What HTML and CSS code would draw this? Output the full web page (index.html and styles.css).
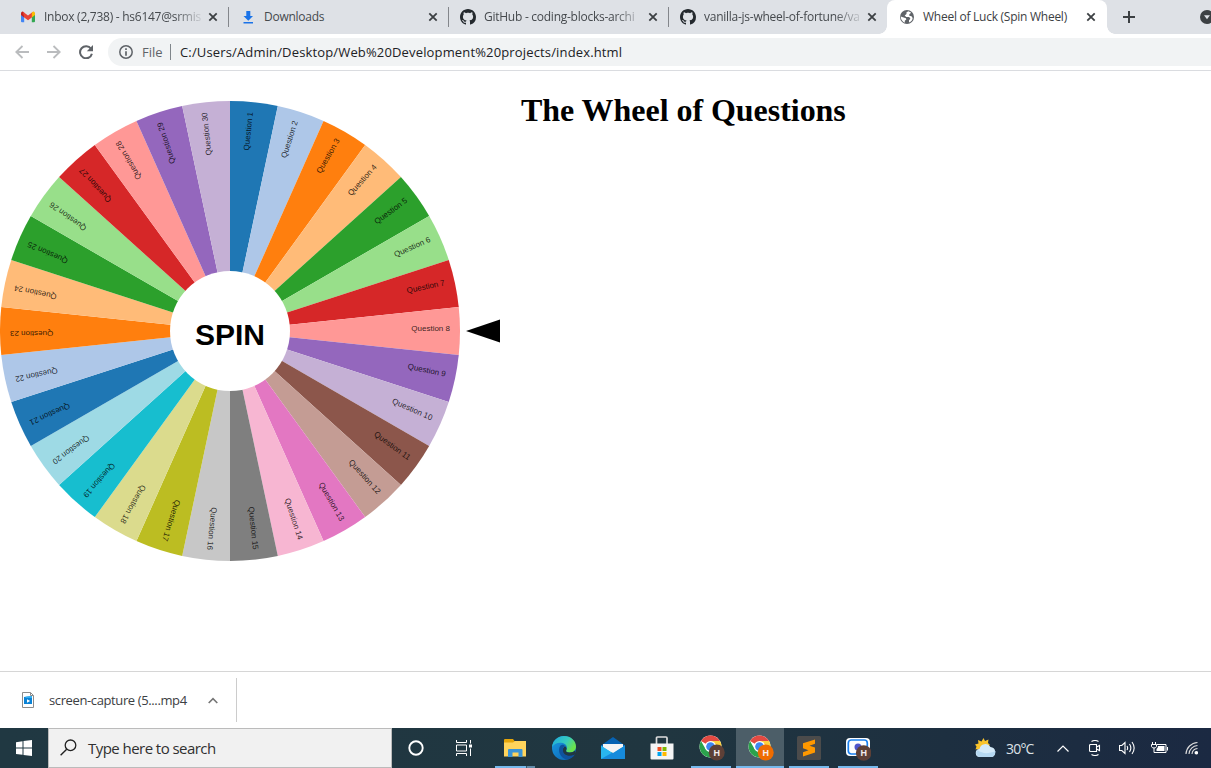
FILE: index.html
```html
<!DOCTYPE html>
<html lang="en">
<head>
<meta charset="utf-8">
<title>Wheel of Luck (Spin Wheel)</title>
<link rel="stylesheet" href="styles.css">
</head>
<body>
<svg class="defs" width="0" height="0" aria-hidden="true">
  <symbol id="close" viewBox="0 0 10 10"><path d="M1.300 1.300l7.400 7.400M8.700 1.300L1.300 8.700" stroke="#3c4043" stroke-width="1.800" fill="none"/></symbol>
  <symbol id="github" viewBox="0 0 16 16"><path fill="#24292e" d="M8 0C3.58 0 0 3.58 0 8c0 3.54 2.29 6.53 5.47 7.59.4.07.55-.17.55-.38 0-.19-.01-.82-.01-1.49-2.01.37-2.53-.49-2.69-.94-.09-.23-.48-.94-.82-1.13-.28-.15-.68-.52-.01-.53.63-.01 1.08.58 1.23.82.72 1.21 1.87.87 2.33.66.07-.52.28-.87.51-1.07-1.78-.2-3.64-.89-3.64-3.95 0-.87.31-1.59.82-2.15-.08-.2-.36-1.02.08-2.12 0 0 .67-.21 2.2.82.64-.18 1.32-.27 2-.27s1.36.09 2 .27c1.53-1.04 2.2-.82 2.2-.82.44 1.1.16 1.92.08 2.12.51.56.82 1.27.82 2.15 0 3.07-1.87 3.75-3.65 3.95.29.25.54.73.54 1.48 0 1.07-.01 1.93-.01 2.2 0 .21.15.46.55.38A8.01 8.01 0 0016 8c0-4.42-3.58-8-8-8z"/></symbol>
  <symbol id="chrome" viewBox="0 0 26 26">
    <circle cx="11.5" cy="11.5" r="11" fill="#fff"/>
    <path d="M11.500 11.500L2 6A11 11 0 0 1 21 6z" fill="#e34a42"/>
    <path d="M11.500 6H21A11 11 0 0 1 11.500 22.500L16.300 14.200z" fill="#fdd03b"/>
    <path d="M2 6A11 11 0 0 0 11.500 22.500L16.300 14.200 6.700 14.200z" fill="#2ba24c"/>
    <circle cx="11.500" cy="11.500" r="5.500" fill="#fff"/><circle cx="11.500" cy="11.500" r="4.300" fill="#3f86f0"/>
  </symbol>
</svg>

<header class="tabstrip">
  <div class="tab">
    <svg class="favicon" viewBox="0 0 16 16"><path d="M1 4v8.300q0 1 1 1h2.200V6.500z" fill="#4285f4"/><path d="M15 4v8.300q0 1-1 1h-2.200V6.500z" fill="#34a853"/><path d="M1 4.300Q1 2.500 2.700 2.500L4.200 3.500v5L1 6z" fill="#c5221f"/><path d="M2.700 2.500L8 6.400l5.300-3.900-1.500 6L8 11.200 4.200 8.400z" fill="#ea4335"/><path d="M11.800 3.600l1.500-1.100Q15 2.700 15 4.300V6l-3.200 2.500z" fill="#fbbc04"/></svg>
    <span class="title fade">Inbox (2,738) - hs6147@srmis</span><svg class="close"><use href="#close"/></svg>
  </div>
  <div class="tab">
    <svg class="favicon" viewBox="0 0 16 16"><path d="M6.300 2h4v5H13L8.300 11.700 3.500 7h2.800zM3.500 13h9.500v1.600H3.500z" fill="#1a73e8"/></svg>
    <span class="title">Downloads</span><svg class="close"><use href="#close"/></svg>
  </div>
  <div class="tab">
    <svg class="favicon"><use href="#github"/></svg>
    <span class="title fade">GitHub - coding-blocks-archi</span><svg class="close"><use href="#close"/></svg>
  </div>
  <div class="tab last">
    <svg class="favicon"><use href="#github"/></svg>
    <span class="title fade">vanilla-js-wheel-of-fortune/va</span><svg class="close"><use href="#close"/></svg>
  </div>
  <div class="tab active">
    <svg class="favicon" viewBox="0 0 16 16"><circle cx="8" cy="8" r="7" fill="#5f6368"/><path d="M9.500 2.300L7.500 3.300v1.800L5.700 6.500l1.500 1.400 3 .2 1.200 1.600-1.400 1.500v2.400Q13.400 12 13.700 9L12.500 7.300l-2.200-.5V5.300l1.900-1.500zM1.700 7.500l5.200 1.700.4 1.400-1.500 1.200v1.900Q2 12 1.700 7.500z" fill="#fff"/></svg>
    <span class="title">Wheel of Luck (Spin Wheel)</span><svg class="close"><use href="#close"/></svg>
  </div>
  <svg class="plus" viewBox="0 0 12 12"><path d="M6 0v12M0 6h12" stroke="#3c4043" stroke-width="2"/></svg>
  <svg class="tabsearch" viewBox="0 0 14 14"><circle cx="7" cy="7" r="7" fill="#3c4043"/><path d="M4 5.200h6L7 9.300z" fill="#dee1e6"/></svg>
</header>

<nav class="toolbar">
  <svg class="arrow" viewBox="0 0 14 14"><path d="M14 7H1.500M7.500 1L1.300 7l6.200 6" fill="none" stroke="#babcbe" stroke-width="1.800"/></svg>
  <svg class="arrow" viewBox="0 0 14 14"><path d="M0 7h12.500M6.500 1l6.200 6-6.200 6" fill="none" stroke="#babcbe" stroke-width="1.800"/></svg>
  <svg class="arrow" viewBox="0 0 14 14"><path d="M12 3.800A6 6 0 1 0 12.900 8.700" fill="none" stroke="#5f6368" stroke-width="2"/><path d="M14 0v6.200H7.800z" fill="#5f6368"/></svg>
  <div class="omnibox">
    <svg class="info" viewBox="0 0 14 14"><circle cx="7" cy="7" r="6.200" fill="none" stroke="#5f6368" stroke-width="1.500"/><path d="M7 3.200v1.700M7 6.200v4.600" stroke="#5f6368" stroke-width="1.700"/></svg>
    <span class="scheme">File</span><span class="url">C:/Users/Admin/Desktop/Web%20Development%20projects/index.html</span>
  </div>
</nav>

<main class="page">
  <svg class="wheel" id="wheel" viewBox="0 0 500 500"></svg>
  <h1>The Wheel of Questions</h1>
</main>

<section class="shelf">
  <div class="download">
    <svg class="file" viewBox="0 0 12 16"><path d="M.5.500h8l3 3v12H.5z" fill="#fff" stroke="#8c8c8c"/><path d="M8.500.500v3h3" fill="none" stroke="#8c8c8c"/><path d="M2 5l8-1v8H2z" fill="#0b83d6"/><path d="M3.500 4.800L10 4v2H3.500z" fill="#31aef0"/><path d="M5 7.200l3.200 1.800L5 10.800z" fill="#fff"/></svg>
    <span class="filename">screen-capture (5....mp4</span>
    <svg class="caret" viewBox="0 0 10 7"><path d="M.7 6L5 1.600 9.300 6" fill="none" stroke="#757575" stroke-width="1.600"/></svg>
  </div>
</section>

<footer class="taskbar">
  <div class="start"><svg width="16" height="16" viewBox="0 0 16 16"><path d="M0 2.200L6.500 1.300v6.200H0zM7.500 1.100L16 0v7.500H7.500zM0 8.500h6.500v6.300L0 13.900zM7.500 8.500H16V16l-8.500-1.100z" fill="#fff"/></svg></div>
  <div class="search"><svg width="17" height="17" viewBox="0 0 17 17"><circle cx="10.500" cy="6.300" r="5.300" fill="none" stroke="#222" stroke-width="1.300"/><path d="M6.700 10.200L.6 16.300" stroke="#222" stroke-width="1.400"/></svg><span>Type here to search</span></div>
  <div class="item cortana"><svg width="16" height="16" viewBox="0 0 16 16"><circle cx="8" cy="8" r="6.700" fill="none" stroke="#fff" stroke-width="1.900"/></svg></div>
  <div class="item taskview"><svg width="16" height="16" viewBox="0 0 16 16"><path d="M.5 0v2.500h10V0M.5 16v-2.500h10V16M.5 5h10v6H.5zM14.500 0v3.500M14.500 8.500V16" fill="none" stroke="#fff"/><path d="M13 4.500h3v3h-3z" fill="#fff"/></svg></div>
  <div class="item explorer"><svg width="22" height="19" viewBox="0 0 22 19"><path d="M0 1q0-1 1-1h8l1.500 2H22v5H0z" fill="#e5a50a"/><path d="M0 3.500h9L11 2h11v15.500H0z" fill="#ffd45c"/><path d="M4 18v-7q0-1 1-1h12.500q1 0 1 1v7h-4v-4.500h-6V18z" fill="#3a94d8"/></svg></div>
  <div class="item"><svg width="24" height="24" viewBox="0 0 24 24">
    <defs><linearGradient id="eg" x1="0" x2="1" y1="0" y2=".5"><stop stop-color="#1ba9df"/><stop offset=".6" stop-color="#37cbbf"/><stop offset="1" stop-color="#6be24b"/></linearGradient><linearGradient id="eb" x1="0" x2="1" y1="0" y2="1"><stop stop-color="#1a9de4"/><stop offset="1" stop-color="#0a5eae"/></linearGradient></defs>
    <circle cx="12" cy="12" r="12" fill="url(#eb)"/><path d="M0 11C1 4 6 0 12 0c7 0 12 5 12 10.500 0 4-3 6-6.500 6-3 0-4-1.300-3.200-2.500C16 11.500 14.500 7 9 6.700 4.500 6.500 1.500 8.500 0 11z" fill="url(#eg)"/><path d="M14.300 14c-.8 1.200.2 2.500 3.200 2.500 2.500 0 4.500-.7 5.500-2v4c-4 3-10 2-12-1.500-1.500-3 .5-6 2-6.700 1.500.7 2 2.500 1.300 3.700z" fill="#203742"/><path d="M8.500 9.500C5 14 8 22.500 15 23.500c3-.5 6-2 8-5-6 3-13 .5-12-5.500.3-1.500 1-2.500 2-3-1-1.300-3-1.700-4.500-.5z" fill="#0e529d"/></svg></div>
  <div class="item"><svg width="24" height="22" viewBox="0 0 24 22"><path d="M0 8.500L12 0l12 8.500V13H0z" fill="#0763b3"/><path d="M2 7h20v8H2z" fill="#f2f2f2"/><path d="M0 8.500L12 16 24 8.500V22H0z" fill="#29b6ef"/><path d="M0 22L24 8.500V22z" fill="#168bdc"/><path d="M2 7h20v2.500L12 16 2 9.500z" fill="#f5f5f5"/></svg></div>
  <div class="item"><svg width="24" height="24" viewBox="0 0 24 24"><path d="M6.500 8V2q0-1 1-1h8.500q1 0 1 1v6" fill="none" stroke="#ddd" stroke-width="1.700"/><path d="M.5 7.500h23v15q0 1-1 1h-21q-1 0-1-1z" fill="#f5f5f5"/><path d="M7.500 11h4v4h-4z" fill="#f25022"/><path d="M12.500 11h4v4h-4z" fill="#7fba00"/><path d="M7.500 16h4v4h-4z" fill="#00a4ef"/><path d="M12.500 16h4v4h-4z" fill="#ffb900"/></svg></div>
  <div class="item open"><svg class="app browser" viewBox="0 0 26 26"><use href="#chrome"/><circle cx="17.700" cy="17.500" r="8" fill="#5d4037"/><text x="17.700" y="20.800" class="badge">H</text></svg></div>
  <div class="item open current"><svg class="app browser" viewBox="0 0 26 26"><use href="#chrome"/><circle cx="17.700" cy="17.500" r="8" fill="#ef6c00"/><text x="17.700" y="20.800" class="badge">H</text></svg></div>
  <div class="item open"><svg width="24" height="24" viewBox="0 0 24 24"><rect width="24" height="24" rx="1.500" fill="#4b4b4b"/><path d="M6 7.200L18 3.500v4.300L12.500 9.700 18 11.500v5L6 20.500v-4.300l5.500-2L6 12.300z" fill="#ff9800"/></svg></div>
  <div class="item open"><svg class="app" viewBox="0 0 26 26"><rect x="1" y="3" width="24" height="18" rx="4" fill="#fff"/><rect x="3.300" y="5" width="19" height="14" rx="3" fill="none" stroke="#1a80ee" stroke-width="1.700"/><circle cx="13" cy="12" r="3.500" fill="#5056cb"/><circle cx="18.700" cy="18" r="7.800" fill="#5d4037"/><text x="18.700" y="21.300" class="badge">H</text></svg></div>
  <div class="tray">
    <svg class="weather" width="22" height="20" viewBox="0 0 22 20"><path d="M8.500 0l1.500 3 3.500-1.500-.5 3.500 2 2-10 7-1.500-3-3 .5 1-3L0 6.500 3.500 5.500 3 2l3.500 1.500z" fill="#f9c42c"/><path d="M5 19a4 4 0 0 1-.5-8 6 6 0 0 1 11-2 5.200 5.200 0 0 1 1.500 10z" fill="#d4eaf9"/><path d="M5 19a4 4 0 0 1-2.500-7c5 4 11 4 18 1-.5 4-2 6-4 6z" fill="#b5d8f2"/></svg>
    <span class="temp">30°C</span>
    <span class="t"><svg width="12" height="7" viewBox="0 0 12 7"><path d="M.5 6.500L6 1l5.500 5.500" fill="none" stroke="#fff" stroke-width="1.200"/></svg></span>
    <span class="t"><svg width="12" height="16" viewBox="0 0 12 16"><path d="M2.500 1.500q3.500-2 7 0M2.500 14.500q3.500 2 7 0M1.500 4.500h6v7h-6q-1 0-1-1v-5q0-1 1-1zM7.500 7l3-1.500v5l-3-1.500" fill="none" stroke="#fff" stroke-width="1.100"/></svg></span>
    <span class="t"><svg width="17" height="14" viewBox="0 0 17 14"><path d="M.5 4.500h2.300L6 1.500v11L2.800 9.500H.5zM8 5q1.300 2 0 4M10.500 3q2.700 4 0 8M13 1q4.300 6 0 12" fill="none" stroke="#fff" stroke-width="1.100"/></svg></span>
    <span class="t"><svg width="17" height="12" viewBox="0 0 17 12"><path d="M1.500 0v2.500M4.500 0v2.500M.5 2.500h5v2q-.5 1.500-2.500 1.500-2 0-2.500-1.500zM3 6v4.500M6 2.500h9v8H3M16.500 5v3.500" fill="none" stroke="#fff"/><path d="M7 4h6.500v5H5.500V7q1.500-1 1.500-3z" fill="#fff"/></svg></span>
    <span class="t"><svg width="13" height="14" viewBox="0 0 13 14"><g fill="none" stroke="#ddd" stroke-width="1.100"><path d="M1 13A12 12 0 0 1 12.500 1.500M4 13a9 9 0 0 1 8.500-8.500M7 13a6 6 0 0 1 5.500-5.500"/></g><circle cx="11.300" cy="11.800" r="1.800" fill="#fff"/></svg></span>
  </div>
</footer>
<script src="wheel.js"></script>
</body>
</html>
```
FILE: styles.css
```css
* { box-sizing: border-box; }
body { margin: 0; width: 1211px; height: 768px; overflow: hidden; display: flex; flex-direction: column; background: #fff; color: #202124; font-family: "Open Sans", "Noto Sans", sans-serif; }
svg { display: block; flex: none; }
.defs { position: absolute; }

.tabstrip { height: 34px; flex: none; background: #dee1e6; display: flex; align-items: center; padding-left: 9px; overflow: hidden; }
.tab { width: 220px; height: 34px; flex: none; display: flex; align-items: center; padding-left: 11px; color: #45494d; font-size: 12px; letter-spacing: -.26px; background: linear-gradient(#83868b, #83868b) right center / 1px 20px no-repeat; }
.tab.last { width: 218px; background: radial-gradient(circle at 0 0, transparent 7.5px, #fff 8px) right bottom / 8px 8px no-repeat; }
.tab.active { padding-left: 12px; background: #fff; color: #3c4043; border-radius: 8px 8px 0 0; }
.favicon { width: 16px; height: 16px; margin-right: 8px; }
.title { width: 160px; margin-right: 4px; flex: none; white-space: nowrap; line-height: 20px; }
.last .title, .active .title { margin-right: 3px; }
.fade { -webkit-mask-image: linear-gradient(90deg, #000 130px, transparent 161px); mask-image: linear-gradient(90deg, #000 130px, transparent 161px); }
.close { width: 10px; height: 10px; }
.plus { width: 12px; height: 34px; padding: 11px 0; box-sizing: content-box; height: 12px; margin-left: 8px; }
.active + .plus { padding-left: 8px; background: radial-gradient(circle at 8px 0, transparent 7.5px, #fff 8px) left bottom / 8px 8px no-repeat; }
.tabsearch { width: 14px; height: 14px; margin-left: 65px; }
.tab.active + .plus { margin-left: 0; padding: 11px 0 11px 16px; }

.toolbar { height: 37px; flex: none; display: flex; align-items: center; padding-left: 15px; border-bottom: 1px solid #dadce0; }
.arrow { width: 14px; height: 14px; margin-right: 18px; }
.omnibox { flex: 1; height: 28px; margin-left: -3px; display: flex; align-items: center; background: #f1f3f4; border-radius: 14px 0 0 14px; padding-left: 11px; font-size: 13px; white-space: nowrap; }
.info { width: 14px; height: 14px; margin-right: 9px; }
.scheme { width: 29px; line-height: 16px; color: #5f6368; border-right: 1px solid #80868b; margin-right: 9px; }
.url { letter-spacing: .15px; }

.page { height: 600px; flex: none; display: flex; align-items: flex-start; }
.wheel { width: 500px; height: 500px; margin-top: 10px; }
.page h1 { margin: 21px 0 0 21px; font: bold 32px/37px "Liberation Serif", serif; letter-spacing: -.04px; color: #000; white-space: nowrap; }
.slice-label { font: 8px "Liberation Sans", sans-serif; text-anchor: end; fill: #000; fill-opacity: .8; }
.spin { font: bold 30px "Liberation Sans", sans-serif; text-anchor: middle; fill: #000; }

.shelf { height: 57px; flex: none; border-top: 1px solid #d6d6d6; padding-top: 6px; }
.download { width: 237px; height: 44px; display: flex; align-items: center; padding-left: 22px; border-right: 1px solid #ccc; font-size: 13px; color: #3c4043; }
.file { width: 12px; height: 16px; margin-right: 15px; }
.filename { width: 159px; white-space: nowrap; letter-spacing: -.38px; }
.caret { width: 10px; height: 7px; }

.taskbar { height: 40px; flex: none; display: flex; color: #fff; background: linear-gradient(90deg, #203842, #203640 55%, #1d2f40 78%, #1b2942); }
.start { width: 48px; display: flex; align-items: center; justify-content: center; }
.search { width: 344px; border: 1px solid #bbb; background: #f1f1f1; color: #303030; display: flex; align-items: center; padding-left: 11px; gap: 11px; font-size: 15px; }
.search span { letter-spacing: -.55px; }
.search svg { margin-top: -2px; }
.item { width: 49px; display: flex; align-items: center; justify-content: center; }
.cortana { width: 48px; }
.taskview { width: 50px; padding-right: 3px; }
.explorer { background: linear-gradient(90deg, #76b9ed 31px, #3d5967 31px, #3d5967 32px, #628ba9 32px) 5px bottom / 40px 2px no-repeat; }
.open { background: linear-gradient(#76b9ed, #76b9ed) center bottom / 40px 2px no-repeat; }
.current { width: 48px; margin-left: 1px; background: linear-gradient(#76b9ed, #76b9ed) center bottom / 48px 2px no-repeat, #4c5e68; }
.app { width: 26px; height: 26px; }
.browser { margin-left: 2px; }
.badge { font: bold 9px "Liberation Sans", sans-serif; fill: #f4eded; text-anchor: middle; }
.tray { margin-left: auto; display: flex; align-items: center; padding-right: 4px; }
.weather { margin-right: 9px; }
.temp { width: 41px; font-size: 14px; letter-spacing: -.8px; color: #dce1e6; white-space: nowrap; }
.t { width: 32px; display: flex; justify-content: center; }
```
FILE: wheel.js
```js
const colors = ['#1f77b4', '#aec7e8', '#ff7f0e', '#ffbb78', '#2ca02c', '#98df8a', '#d62728', '#ff9896', '#9467bd', '#c5b0d5', '#8c564b', '#c49c94', '#e377c2', '#f7b6d2', '#7f7f7f', '#c7c7c7', '#bcbd22', '#dbdb8d', '#17becf', '#9edae5'];
const count = 30;
const radius = 230;
const point = a => `${radius * Math.sin(a)} ${-radius * Math.cos(a)}`;
let out = '<g transform="translate(230 250)">';
for (let i = 0; i < count; i++) {
  const a = i * 2 * Math.PI / count;
  const b = (i + 1) * 2 * Math.PI / count;
  out += `<path d="M0 0L${point(a)}A${radius} ${radius} 0 0 1 ${point(b)}z" fill="${colors[i % 20]}"/>`;
}
for (let i = 0; i < count; i++) {
  out += `<text class="slice-label" transform="rotate(${(i + 0.5) * 360 / count - 90}) translate(220 0)">Question ${i + 1}</text>`;
}
out += '<circle r="60" fill="#fff"/><text class="spin" y="14">SPIN</text></g>';
out += '<path d="M466 250L500 238.500V261.500z"/>';
document.getElementById('wheel').innerHTML = out;
```
